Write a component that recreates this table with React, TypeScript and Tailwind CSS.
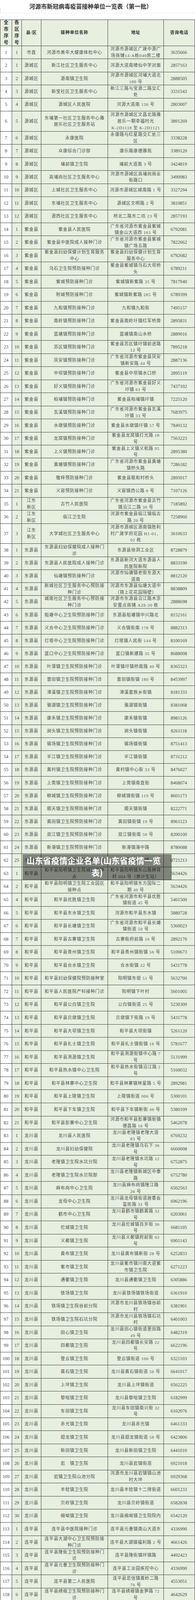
type Row = [number, number, string, string, string, string]

const rows: Row[] = [
  [1, 1, "市直", "河源市美年大健康体检中心", "河源市源城区广晟中源广\n场商铺14-A栋040房二楼", "3635666"],
  [2, 1, "源城区", "新江社区卫生服务中心", "河源大道南啸仙中学对面", "2857163"],
  [3, 2, "源城区", "源南镇卫生院", "河源市源城区河埔大道北\n180 号", "2888505"],
  [4, 3, "源城区", "新宝社区卫生服务中心", "新江三路与宝源二路交汇\n处", "3331543"],
  [5, 4, "源城区", "源城区人民医院", "河源大道南 136 号", "2803007"],
  [6, 5, "源城区", "东埔第一社区卫生服务中心雅\n居乐社区卫生服务站", "河源市源城区文昌北路雅\n居乐一期幸福时光\nK-2D1118 至 K-2D1121", "3891269"],
  [7, 6, "源城区", "永康医院", "永康路与红星路交汇处三\n区", "3338228"],
  [8, 7, "源城区", "众康综合门诊部", "康乐路康德雅苑", "3389120"],
  [9, 8, "源城区", "埔前镇卫生院", "埔前大道南 3 号", "3424819"],
  [10, 9, "源城区", "高埔岗社区卫生服务中心", "河源市源城区高埔岗商业\n街路口", "3490983"],
  [11, 10, "源城区", "上城社区卫生服务中心", "河源市源城区城南路 1 号", "3327294"],
  [12, 11, "源城区", "东埔社区卫生服务中心", "源城区文明路 2 号", "3810851"],
  [13, 12, "源城区", "源西社区卫生服务中心", "桥北二路东二坊 23 号", "2857193"],
  [14, 1, "紫金县", "紫金县人民医院", "广东省河源市紫金县紫城\n镇金山大道西 163 号", "6792081"],
  [15, 2, "紫金县", "紫金县中医院成人接种门诊", "广东省河源市紫金县紫城\n镇广场五路", "7822662"],
  [16, 3, "紫金县", "紫金县妇幼保健计划生育服务\n中心", "紫金县妇幼保健计划生育\n服务中心", "6792682"],
  [17, 4, "紫金县", "乌石卫生院预防接种门诊", "紫金县紫城镇乌石大坝桥\n头", "6789211"],
  [18, 5, "紫金县", "紫城预防接种门诊", "紫城镇新紫路 35 号", "7817940"],
  [19, 6, "紫金县", "附城预防接种门诊", "紫城镇新紫路 285 号", "6789399"],
  [20, 7, "紫金县", "九和镇预防接种门诊", "九和镇九和街", "7495157"],
  [21, 8, "紫金县", "南岭镇预防接种门诊", "紫金县南岭圩镇红军桥旁", "2895831"],
  [22, 9, "紫金县", "蓝塘镇预防接种门诊", "蓝塘镇南山水桥", "2889016"],
  [23, 10, "紫金县", "苏区镇预防接种门诊", "紫金县苏区镇圩镇前进路\n12 号", "7895218"],
  [24, 11, "紫金县", "凤安镇预防接种门诊", "广东省河源市紫金县凤安\n镇新安路 44 号", "2887136"],
  [25, 12, "紫金县", "中坝镇预防接种门诊", "紫金县中坝镇水口桥", "2895119"],
  [26, 13, "紫金县", "好义镇预防接种门诊", "广东省河源市紫金县好义\n圩镇 61 号", "7437102"],
  [27, 14, "紫金县", "柏埔镇预防接种门诊", "紫金县柏埔镇圩镇", "7225120"],
  [28, 15, "紫金县", "瓦溪镇预防接种门诊", "广东省河源市紫金县瓦溪\n圩镇 33 号", "7683975"],
  [29, 16, "紫金县", "水墩镇预防接种门诊", "紫金县水墩镇圩镇 57 号", "7849132"],
  [30, 17, "紫金县", "龙窝镇预防接种门诊", "紫金县龙窝镇灯光路 18\n号", "7563223"],
  [31, 18, "紫金县", "上义镇预防接种门诊", "紫金县上义镇义和路 95\n号", "2895380"],
  [32, 19, "紫金县", "黄塘镇预防接种门诊", "广东省河源市紫金县黄塘\n镇桥头路", "7286182"],
  [33, 20, "紫金县", "敬梓预防接种门诊", "紫金县联和村桥头", "2895017"],
  [34, 21, "紫金县", "义容预防接种门诊", "义容镇西公路 6 号", "7107126"],
  [35, 1, "江东\n新区", "古竹人民医院", "广东省河源市紫金县古竹\n镇沿江二路 30 号", "7185892"],
  [36, 2, "江东\n新区", "临江卫生院", "河源市紫金县临江镇临古\n路 26 号", "7258960"],
  [37, 3, "江东\n新区", "大学城社区卫生服务中心", "河源市源城区源南镇胜利\n村广晟学府花园 H1-01、\n02 栋", "3610633"],
  [38, 1, "东源县", "东源县妇幼保健院成人接种门\n诊", "东源县徐洞工业区", "8728879"],
  [39, 2, "东源县", "东源县人民医院成人接种门诊", "东源县新河大道东源县人\n民医院新院", "8833190"],
  [40, 3, "东源县", "仙塘镇预防接种门诊", "河源市仙塘镇老街东源大\n道南", "8812120"],
  [41, 4, "东源县", "新城社区卫生服务中心预防接\n种门诊", "河源市东源县仙塘大道中\n（锦上花花园隔壁）", "8838809"],
  [42, 5, "东源县", "城南社区卫生服务中心预防接\n种门诊", "河源市东源县沿江路木京\n安置点商铺 A28-30 栋", "2888698"],
  [43, 6, "东源县", "船塘中心卫生院预防接种门诊", "东源县船塘镇中兴路北", "8152161"],
  [44, 7, "东源县", "义合中心卫生院预防接种门诊", "义合镇街南 178 号", "8882313"],
  [45, 8, "东源县", "灯塔中心卫生院预防接种门诊", "灯塔镇人民街 144 号", "8100169"],
  [46, 9, "东源县", "蓝口中心卫生院预防接种门诊", "蓝口镇新建路 35 号", "8688008"],
  [47, 10, "东源县", "叶潭镇卫生院预防接种门诊", "叶潭镇圩镇桥南路 40 号", "8365323"],
  [48, 11, "东源县", "曾田镇卫生院预防接种门诊", "曾田镇街镇 180 号", "8453997"],
  [49, 12, "东源县", "漳溪镇卫生院预防接种门诊", "漳溪畲族乡街镇", "8181333"],
  [50, 13, "东源县", "骆湖镇卫生院预防接种门诊", "骆湖镇街镇", "8381068"],
  [51, 14, "东源县", "康禾镇卫生院预防接种门诊", "康禾镇街镇", "8981126"],
  [52, 15, "东源县", "涧头镇卫生院预防接种门诊", "涧头镇街镇", "8261118"],
  [53, 16, "东源县", "锡场镇卫生院预防接种门诊", "锡场镇街镇", "8751413"],
  [54, 17, "东源县", "半江镇卫生院预防接种门诊", "半江镇街镇", "8731212"],
  [55, 18, "东源县", "黄村镇卫生院预防接种门诊", "黄村镇中心街 33 号", "8476027"],
  [56, 19, "东源县", "上莞镇卫生院预防接种门诊", "上莞镇南直街", "8468074"],
  [57, 20, "东源县", "柳城镇卫生院预防接种门诊", "柳城镇街镇 119 号", "8601173"],
  [58, 21, "东源县", "顺天镇卫生院预防接种门诊", "顺天镇街镇", "8222771"],
  [59, 22, "东源县", "黄田镇卫生院预防接种门诊", "黄田镇街镇 19 号", "8961123"],
  [60, 23, "东源县", "双江镇卫生院预防接种门诊", "双江镇街南 50 号", "8200100"],
  [61, 24, "东源县", "新港镇卫生院预防接种门诊", "新港镇港中路", "8780688"],
  [62, 25, "东源县", "新回龙镇卫生院预防接种门诊", "新回龙镇街镇", "8721213"],
  [63, 1, "和平县", "和平县阳明镇卫生院城区接种\n点", "和平县阳明镇东山路狮背\n村 004 号（原计生站）", "5634426"],
  [64, 2, "和平县", "和平县阳明镇卫生院工业园区\n接种点", "和平县阳明镇东方国际二\n期 40 号", "5634426"],
  [65, 4, "和平县", "和平县优胜镇卫生院", "广东省河源市和平县优胜\n镇街道 45 号", "5401500"],
  [66, 5, "和平县", "和平县东水镇卫生院", "河源市和平县东水镇", "5880728"],
  [67, 6, "和平县", "和平县长塘镇卫生院", "广东省河源市和平县长塘\n镇街道 50 号", "5360023"],
  [68, 7, "和平县", "和平县古寨镇卫生院", "古寨街府前路 16 号", "2892170"],
  [69, 8, "和平县", "和平县青州镇卫生院", "和平县青州镇街镇 56 号", "5100673"],
  [70, 9, "和平县", "和平县合水镇卫生院", "合水街镇 22 号", "5431778"],
  [71, 10, "和平县", "和平县妇幼保健院预防接种室", "阳明镇东堤 51 号", "5632700"],
  [72, 11, "和平县", "和平县人民医院产科接种门诊", "阳明镇下叶村", "5601005"],
  [73, 12, "和平县", "和平县公白镇卫生院", "公白镇街道 25 号", "5230300"],
  [74, 13, "和平县", "和平县贝墩镇卫生院", "贝墩镇下街路 19 号", "5431778"],
  [75, 14, "和平县", "和平县大坝镇卫生院", "和平县大坝街镇", "5261120"],
  [76, 15, "和平县", "和平县礼士镇卫生院", "和平县礼士镇街镇 16 号", "5781677"],
  [77, 16, "和平县", "和平县浰源镇卫生院", "和平县浰源街镇中心路 7\n号", "5131999"],
  [78, 17, "和平县", "和平县热水镇中心卫生院", "和平县热水街镇沿江路 2\n号", "5160032"],
  [79, 18, "和平县", "和平县林寨中心卫生院", "和平县林寨镇林星路 5 号", "2892981"],
  [80, 19, "和平县", "和平县上陵镇卫生院", "上陵镇街道 006 号", "5300101"],
  [81, 20, "和平县", "和平县下车镇卫生院", "和平县下车镇新街 46 号", "5380109"],
  [82, 21, "和平县", "和平县彭寨中心卫生院", "河源市和平县彭寨镇街镇\n德昌路 16 号", "5462078"],
  [83, 1, "龙川县", "龙川县人民医院", "龙川县老隆镇老隆大道\n83 号", "6769232"],
  [84, 2, "龙川县", "龙川县妇幼保健院", "龙川县老隆镇乌石下 36\n号", "6660008"],
  [85, 3, "龙川县", "老隆镇卫生院水坑分院", "龙川县老隆镇水坑路 12\n号", "6752875"],
  [86, 4, "龙川县", "老隆镇卫生院水贝院部", "龙川县老隆镇新城区中泰\n路", "6752780"],
  [87, 5, "龙川县", "麻布岗中心卫生院", "龙川县麻布岗镇隆江路\n26 号", "6502563"],
  [88, 6, "龙川县", "龙母中心卫生院", "龙川县龙母镇街道居委会\n富民路 31 号", "6962196"],
  [89, 7, "龙川县", "鹤市中心卫生院", "龙川县鹤市镇鹤黄路 32\n号", "6203061"],
  [90, 8, "龙川县", "佗城镇卫生院", "龙川县佗城镇百岁街 36\n号", "6681105"],
  [91, 9, "龙川县", "义都镇卫生院", "龙川县义都镇府前街 63\n号", "6901143"],
  [92, 10, "龙川县", "黄布镇卫生院", "龙川县黄布镇新街 28 号", "6252833"],
  [93, 11, "龙川县", "紫市镇卫生院", "龙川县紫市镇川南大道紫\n市镇卫生院", "6271223"],
  [94, 12, "龙川县", "通衢镇卫生院", "龙川县通衢镇卫生院", "6305886"],
  [95, 13, "龙川县", "铁场镇卫生院", "龙川县铁场镇铁场街道", "6361910"],
  [96, 14, "龙川县", "铁场镇卫生院谷前分院", "河源市龙川县铁场镇谷前\n村", "6381901"],
  [97, 15, "龙川县", "铁场镇卫生院石坑分院", "河源市龙川县铁场镇石坑\n村", "6401003"],
  [98, 16, "龙川县", "田心镇卫生院", "龙川县田心镇街道里田路\n49 号", "6482319"],
  [99, 17, "龙川县", "四都镇卫生院", "龙川县四都镇长安路 22\n号", "6622196"],
  [100, 18, "龙川县", "登云镇卫生院", "登云镇街道 106 号", "6321103"],
  [101, 19, "龙川县", "黄石镇卫生院", "龙川县黄石镇街道 56 号", "6641017"],
  [102, 20, "龙川县", "上坪镇卫生院", "龙川县上坪镇街道", "6562225"],
  [103, 21, "龙川县", "黎咀镇卫生院", "龙川县黎咀镇卫生院", "6182999"],
  [104, 22, "龙川县", "车田镇卫生院", "龙川县车田镇南兴街 32\n号", "6102076"],
  [105, 23, "龙川县", "赤光镇卫生院", "龙川县赤光镇", "6461333"],
  [106, 24, "龙川县", "廻龙镇卫生院", "龙川县廻龙镇街道 58 号", "6423806"],
  [107, 25, "龙川县", "新田镇卫生院", "龙川县新田镇卫生院", "6441010"],
  [108, 26, "龙川县", "岩　镇卫生院", "龙川县岩镇街道", "6921018"],
  [109, 27, "龙川县", "岩镇卫生院山池分院", "河源市龙川县岩镇镇山池\n村大坪", "6929368"],
  [110, 28, "龙川县", "丰稔镇卫生院", "龙川县丰稔镇十二排街道", "6601233"],
  [111, 29, "龙川县", "贝岭镇卫生院", "龙川县贝岭镇街道", "6582838"],
  [112, 30, "龙川县", "细坳镇卫生院", "龙川县细坳镇卫生院院内", "6542120"],
  [113, 1, "连平县", "连平县中医院接种门诊", "连平县元善镇南山大道东", "4336990"],
  [114, 2, "连平县", "连平县大湖中心卫生院预防接\n种门诊", "连平县大湖镇福利路 2 号", "4661426"],
  [115, 3, "连平县", "连平县隆街卫生院预防接种门\n诊", "连平县隆街镇环镇路", "4492423"],
  [116, 4, "连平县", "连平县元善卫生院预防接种门\n诊", "连平县工业园疾控中心", "4336990"],
  [117, 5, "连平县", "连平县第二人民医院", "连平县忠信镇黄岭二路\n76 号", "4553051"],
  [118, 6, "连平县", "连平县绣缎卫生院预防接种门\n诊", "连平县绣缎镇金笋路 72\n号", "4642629"],
  [119, 7, "连平县", "连平县上坪中心卫生院预防接\n种门诊", "连平县上坪镇国道东街 6\n号", "4882028"],
  [120, 8, "连平县", "连平县田源卫生院预防接种门\n诊", "连平县田源镇街镇", "4431198"],
  [121, 9, "连平县", "连平县油溪卫生院预防接种门\n诊", "连平县油溪镇官灯岚", "4552965"],
  [122, 10, "连平县", "连平县溪山卫生院预防接种门\n诊", "连平县溪山镇 105 国道马\n洞村路口", "4911966"],
  [123, 11, "连平县", "连平县忠信卫生院预防接种门\n诊", "连平县忠信镇人民路 161\n号", "4551829"],
  [124, 12, "连平县", "连平县三角卫生院预防接种门\n诊", "连平县三角镇阳光大道", "4613889"],
  [125, 13, "连平县", "连平县陂头中心卫生院预防接\n种门诊", "连平县陂头镇新东街", "4772262"],
  [126, 14, "连平县", "连平县陂头贵东预防接种门诊", "连平县陂头镇贵东街人民\n路 37 号", "4791218"],
  [127, 15, "连平县", "连平县高莞卫生院预防接种门\n诊", "连平县高莞镇丁村", "4511329"],
  [128, 16, "连平县", "连平县内莞卫生院预防接种门\n诊", "连平县内莞镇府旁 15 号", "4891490"],
]

const cols = "grid grid-cols-[30px_25px_50px_171px_143px_80px]"
const cell = "flex items-center justify-center overflow-hidden border-r border-b border-[#3f3f3f] text-center whitespace-pre leading-[16.7px]"
const cjk = "text-[11px] tracking-[0.8px] text-[#505050]"
const num = "text-[12px]"

// the source scan stretches unevenly, so row heights vary a little by block
function rowHeight(n: number) {
  if (n === 6 || n === 37) return "h-[51.7px]"
  if (n <= 36) return "h-[33.47px]"
  if (n <= 61) return "h-[33.08px]"
  return "h-[33.57px]"
}

function DataRow({ row }: { row: Row }) {
  const [all, area, county, name, addr, phone] = row
  return (
    <div className={`${cols} ${rowHeight(all)}`}>
      <div className={`${cell} ${num} bg-white`}>{all}</div>
      <div className={`${cell} ${num}`}>{area}</div>
      <div className={`${cell} ${cjk}`}>{county}</div>
      <div className={`${cell} ${cjk}`}>{name}</div>
      <div className={`${cell} ${cjk}`}>{addr}</div>
      <div className={`${cell} ${num} pr-[2px]`}>{phone}</div>
    </div>
  )
}

export default function App() {
  return (
    <div className="relative h-[4436px] w-[500px] overflow-hidden bg-white font-['Liberation_Serif','Noto_Sans_CJK_SC',serif] text-[#474747]">
      <div className="flex h-[33px]">
        <div className="mt-[20px] h-[13px] w-px bg-[#d4d4d4]" />
        <h1 className="pl-[74px] pt-[6px] font-['Noto_Sans_CJK_SC',sans-serif] text-[15px] font-bold leading-[20px] text-[#333]">
          河源市新冠病毒疫苗接种单位一览表（第一批）
        </h1>
      </div>
      <div className="h-[17px] border-t border-dashed border-[#e2e2e2]" />

      <div className="border-l border-[#3f3f3f] bg-[#e7efdf]">
        <div className={`${cols} h-[67.7px] border-t border-[#3f3f3f] font-bold text-[#333]`}>
          <div className={`${cell} text-[12px] leading-[16.3px]`}>{"全\n市\n序\n号"}</div>
          <div className={`${cell} text-[12px] leading-[16.3px]`}>{"各\n区\n序\n号"}</div>
          <div className={`${cell} text-[11px] tracking-[0.8px]`}>县/区</div>
          <div className={`${cell} text-[11px] tracking-[0.8px]`}>接种单位名称</div>
          <div className={`${cell} text-[11px] tracking-[0.8px]`}>地址</div>
          <div className={`${cell} text-[11px] tracking-[0.8px]`}>咨询电话</div>
        </div>
        {rows.map((r) => (
          <DataRow key={r[0]} row={r} />
        ))}
      </div>

      <div className="absolute left-[58px] top-[2187px] w-[382px] bg-black/45 pb-[4px] font-['Noto_Sans_CJK_SC',sans-serif] text-[21px] font-bold leading-[31px] text-white">
        <span className="block pl-[10px]">山东省疫情企业名单(山东省疫情一览</span>
        <span className="block text-center">表)</span>
      </div>
    </div>
  )
}
